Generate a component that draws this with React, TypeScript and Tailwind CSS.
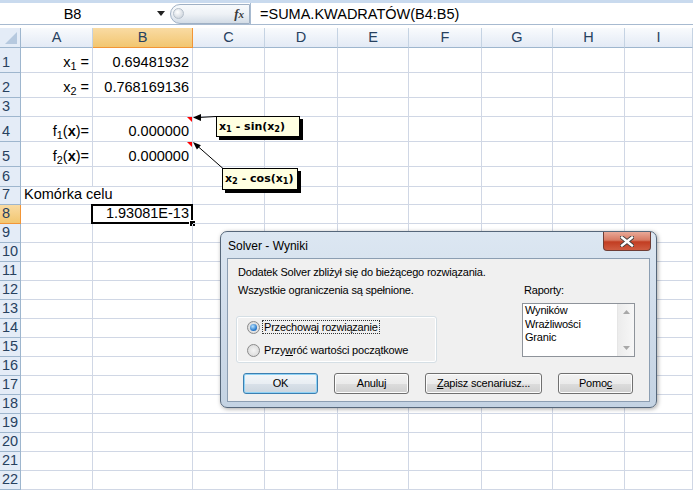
import React from 'react';

const COLS = ['A', 'B', 'C', 'D', 'E', 'F', 'G', 'H', 'I'];
const NROWS = 22;

type CellDef = { content: React.ReactNode; align: 'left' | 'right' };

const cells: Record<string, CellDef> = {
  '1-A': { content: <>x<sub>1</sub> =</>, align: 'right' },
  '1-B': { content: '0.69481932', align: 'right' },
  '2-A': { content: <>x<sub>2</sub> =</>, align: 'right' },
  '2-B': { content: '0.768169136', align: 'right' },
  '4-A': { content: <>f<sub>1</sub>(<b>x</b>)=</>, align: 'right' },
  '4-B': { content: '0.000000', align: 'right' },
  '5-A': { content: <>f<sub>2</sub>(<b>x</b>)=</>, align: 'right' },
  '5-B': { content: '0.000000', align: 'right' },
  '7-A': { content: 'Komórka celu', align: 'left' },
  '8-B': { content: '1.93081E-13', align: 'right' },
};

function FormulaBar() {
  return (
    <div className="h-[28px] bg-white flex flex-col">
      <div className="h-[3px] bg-[#c9daee]" />
      <div className="h-[22px] flex items-center border-b border-[#a7bad0] bg-white">
        <div className="w-[167px] h-full flex items-center">
          <div className="w-[145px] text-center leading-[18px]">B8</div>
          <svg width="8" height="5" viewBox="0 0 8 5" className="ml-[12px]">
            <polygon points="0,0 8,0 4,5" fill="#222" />
          </svg>
        </div>
        <div className="ml-[3px] w-[80px] h-[20px] rounded-l-full border border-[#9fb0c4] bg-gradient-to-b from-[#f8fafc] via-[#eef2f6] to-[#d3dce6] flex items-center">
          <div className="ml-[2px] w-[11px] h-[11px] rounded-full border border-[#b5bfca] bg-[radial-gradient(circle_at_40%_35%,#ffffff,#c3ccd6)]" />
          <span className="ml-auto mr-[5px] font-['Liberation_Serif',serif] italic font-bold text-[13px] text-[#3a3a3a] leading-[14px]">
            f<span className="text-[11px]">x</span>
          </span>
        </div>
        <div className="flex-1 h-full flex items-center border-l border-[#a7bad0] pl-[9px] leading-[18px]">
          =SUMA.KWADRATÓW(B4:B5)
        </div>
      </div>
    </div>
  );
}

function Sheet() {
  const out: React.ReactNode[] = [];
  out.push(
    <div key="corner" className="relative border-r border-b border-[#9eb6ce] bg-[#e4ecf7]">
      <svg width="12" height="12" viewBox="0 0 12 12" className="absolute right-[3px] bottom-[3px]">
        <polygon points="12,0 12,12 0,12" fill="#b6c9df" />
      </svg>
    </div>
  );
  COLS.forEach((c) => {
    const sel = c === 'B';
    out.push(
      <div
        key={'h' + c}
        className={
          sel
            ? 'flex items-center justify-center border-r border-b border-[#f29536] bg-gradient-to-b from-[#f9dba3] to-[#f2c66f] text-[#27415f]'
            : 'flex items-center justify-center border-r border-b border-r-[#c5d3e3] border-b-[#9eb6ce] bg-gradient-to-b from-[#f9fbfd] to-[#e3eaf5] text-[#27415f]'
        }
      >
        {c}
      </div>
    );
  });
  for (let r = 1; r <= NROWS; r++) {
    const sel = r === 8;
    out.push(
      <div
        key={'r' + r}
        className={
          sel
            ? 'flex items-end pl-[2px] pb-[1px] leading-[17px] border-r border-b border-[#f29536] bg-gradient-to-b from-[#f9dba3] to-[#f2c66f] text-[#27415f]'
            : 'flex items-end pl-[2px] pb-[1px] leading-[17px] border-r border-b border-[#9eb6ce] bg-[#e4ecf7] text-[#27415f]'
        }
      >
        {r}
      </div>
    );
    COLS.forEach((c) => {
      const key = `${r}-${c}`;
      const def = cells[key];
      const noRight = key === '7-A';
      const isSel = key === '8-B';
      out.push(
        <div
          key={key}
          className={
            (noRight ? 'border-r-transparent ' : 'border-r-[#d0d7e5] ') +
            'relative border-r border-b border-b-[#d0d7e5] flex items-end pb-[1px] leading-[17px] whitespace-nowrap ' +
            (def?.align === 'right' ? 'justify-end pr-[3px]' : 'justify-start pl-[3px]')
          }
        >
          {def && <span>{def.content}</span>}
          {isSel && (
            <>
              <div className="absolute -left-[2px] -top-[1px] -right-[1px] bottom-[-1px] border-2 border-black pointer-events-none" />
              <div className="absolute -right-[4px] -bottom-[4px] w-[7px] h-[7px] bg-black border border-white" />
            </>
          )}
        </div>
      );
    });
  }
  return (
    <div className="grid grid-cols-[21px_72px_100px_72px_73px_71px_73px_71px_72px_68px] grid-rows-[20px_25px_25px_19px_25px_25px_20px_18px_19px_19px_19px_19px_19px_19px_19px_19px_19px_19px_19px_19px_19px_19px_19px] bg-white">
      {out}
    </div>
  );
}

function Comments() {
  return (
    <>
      <svg width="693" height="491" className="absolute left-0 top-0 pointer-events-none">
        <polygon points="187,117 192,117 192,122" fill="#ff0000" />
        <polygon points="187,142 192,142 192,147" fill="#ff0000" />
        <line x1="216" y1="116.5" x2="198" y2="117.5" stroke="#000" strokeWidth="1" />
        <polygon points="193,117.5 201,114 201,121" fill="#000" />
        <line x1="223" y1="168.5" x2="198" y2="146.5" stroke="#000" strokeWidth="1" />
        <polygon points="193,142 200.9,145.2 196.9,149.6" fill="#000" />
      </svg>
      <div className="absolute left-[216px] top-[116px] w-[84px] h-[21px] bg-[#ffffe1] border border-black shadow-[3px_3px_0_#000] font-['DejaVu_Sans',sans-serif] font-bold text-[11px] leading-[19px] pl-[2px] whitespace-nowrap">
        x<sub>1</sub> - sin(x<sub>2</sub>)
      </div>
      <div className="absolute left-[222px] top-[168px] w-[76px] h-[22px] bg-[#ffffe1] border border-black shadow-[3px_3px_0_#000] font-['DejaVu_Sans',sans-serif] font-bold text-[11px] leading-[20px] pl-[2px] whitespace-nowrap">
        x<sub>2</sub> - cos(x<sub>1</sub>)
      </div>
    </>
  );
}

function Radio({ checked }: { checked?: boolean }) {
  return (
    <span className="w-[13px] h-[13px] rounded-full border border-[#8a8a8a] bg-[radial-gradient(circle_at_50%_50%,#f4f4f4,#d4d4d4)] flex items-center justify-center shrink-0">
      {checked && (
        <span className="w-[7px] h-[7px] rounded-full bg-[radial-gradient(circle_at_40%_35%,#b8e4ff,#1c6fc6_70%,#0e4f9c)]" />
      )}
    </span>
  );
}

function Btn({ w, children, def }: { w: string; children: React.ReactNode; def?: boolean }) {
  return (
    <div
      className={
        w +
        ' h-[21px] rounded-[3px] border flex items-center justify-center text-[11px] ' +
        (def
          ? 'border-[#3c7fb1] shadow-[inset_0_0_0_1px_#8fd2f5] bg-[linear-gradient(#f2f6f9,#e9eef3_50%,#d9e1e9_51%,#ccd6df)]'
          : 'border-[#707070] shadow-[inset_0_0_0_1px_#fcfcfc] bg-[linear-gradient(#f2f2f2,#ebebeb_50%,#dddddd_51%,#cfcfcf)]')
      }
    >
      <span>{children}</span>
    </div>
  );
}

function Dialog() {
  return (
    <div className="absolute left-[220px] top-[231px] w-[437px] h-[177px] rounded-[7px] border border-[#56677a] bg-gradient-to-b from-[#dce7f2] via-[#d0dcea] to-[#c4d3e3] shadow-[1px_1px_4px_rgba(0,0,0,0.35)] flex flex-col font-['Liberation_Sans',Arial,sans-serif] text-black">
      <div className="h-[26px] flex items-start justify-between">
        <span className="pl-[7px] pt-[7px] text-[12px] leading-[14px]">Solver - Wyniki</span>
        <div className="mr-[5px] w-[48px] h-[19px] rounded-b-[4px] border border-t-0 border-[#6f3d35] bg-[linear-gradient(#e9a998,#d77a63_45%,#c23d22_55%,#cf5c41)] flex items-center justify-center">
          <svg width="14" height="11" viewBox="0 0 14 11">
            <path d="M2 1.5 L12 9.5 M12 1.5 L2 9.5" stroke="#3c3c3c" strokeWidth="4.2" strokeLinecap="square" />
            <path d="M2 1.5 L12 9.5 M12 1.5 L2 9.5" stroke="#ffffff" strokeWidth="2.4" strokeLinecap="square" />
          </svg>
        </div>
      </div>
      <div className="mx-[6px] h-[144px] border border-[#8c9eb2] bg-[#f0f0f0] flex flex-col pl-[8px] pr-[14px] pt-[4px] text-[11px] tracking-[-0.2px]">
        <div className="flex">
          <div className="w-[280px] flex flex-col">
            <div className="pl-[2px] leading-[18px] whitespace-nowrap">
              Dodatek Solver zbliżył się do bieżącego rozwiązania.
              <br />
              Wszystkie ograniczenia są spełnione.
            </div>
            <div className="mt-[17px] w-[201px] h-[47px] rounded-[3px] border border-[#d5dfe5] shadow-[inset_0_0_0_1px_#ffffff] flex flex-col pl-[10px] pt-[3px] gap-[9px]">
              <div className="h-[14px] flex items-center">
                <Radio checked />
                <span className="ml-[2px] px-[1px] leading-[12px] border border-dotted border-[#333]">Przechowaj rozwiązanie</span>
              </div>
              <div className="h-[14px] flex items-center">
                <Radio />
                <span className="ml-[3px] px-[1px] leading-[12px]">
                  Przy<span className="underline">w</span>róć wartości początkowe
                </span>
              </div>
            </div>
          </div>
          <div className="ml-auto w-[113px] flex flex-col pt-[18px]">
            <div className="pl-[2px] leading-[18px]">Raporty:</div>
            <div className="mt-[4px] h-[54px] border border-[#8e939a] bg-white flex">
              <div className="flex-1 pl-[2px] leading-[13.5px]">
                <div>Wyników</div>
                <div>Wrażliwości</div>
                <div>Granic</div>
              </div>
              <div className="w-[17px] bg-[linear-gradient(90deg,#ececec,#f7f7f7)] border-l border-[#e6e6e6] flex flex-col items-center justify-between py-[6px]">
                <svg width="7" height="4" viewBox="0 0 7 4">
                  <polygon points="3.5,0 7,4 0,4" fill="#a8a8a8" />
                </svg>
                <svg width="7" height="4" viewBox="0 0 7 4">
                  <polygon points="0,0 7,0 3.5,4" fill="#a8a8a8" />
                </svg>
              </div>
            </div>
          </div>
        </div>
        <div className="mt-[10px] ml-[7px] flex gap-[16px]">
          <Btn w="w-[75px]" def>OK</Btn>
          <Btn w="w-[75px]">Anuluj</Btn>
          <Btn w="w-[117px]">
            <span className="underline">Z</span>apisz scenariusz...
          </Btn>
          <Btn w="w-[75px]">
            Pomo<span className="underline">c</span>
          </Btn>
        </div>
      </div>
    </div>
  );
}

export default function App() {
  return (
    <div className="relative w-[693px] h-[491px] overflow-hidden bg-white font-['Liberation_Sans',Arial,sans-serif] text-[14.5px] text-black">
      <FormulaBar />
      <Sheet />
      <Comments />
      <Dialog />
    </div>
  );
}
